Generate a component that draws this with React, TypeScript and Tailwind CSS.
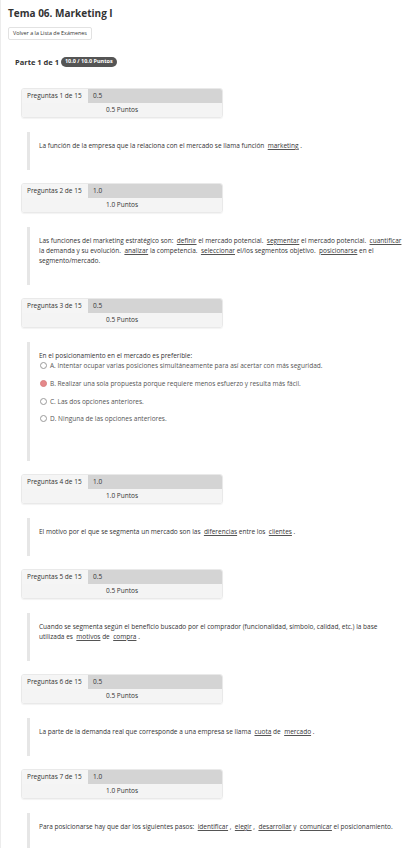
import React from "react";

type Q = {
  n: number;
  pts: string;
  body: React.ReactNode;
  pb?: string;
};

const U = ({ children }: { children: React.ReactNode }) => (
  <>
    {"\u00a0"}
    <span className="underline decoration-[#555] underline-offset-[1px]">{children}</span>
  </>
);

function Header({ n, pts }: { n: number; pts: string }) {
  return (
    <div className="w-[202px] rounded-[3px] border border-[#e9e9e9] overflow-hidden shadow-[0_1px_1px_rgba(0,0,0,0.05)] text-[6.5px] text-[#333]">
      <div className="flex h-[14px]">
        <div className="w-[66px] bg-[#f5f5f5] pl-[5px] flex items-center">Preguntas {n} de 15</div>
        <div className="flex-1 bg-[#d4d4d4] pl-[5px] flex items-center">{pts}</div>
      </div>
      <div className="h-[14px] bg-[#f4f4f4] flex items-center justify-center">
        {pts} Puntos
      </div>
    </div>
  );
}

function Radio({ filled }: { filled?: boolean }) {
  return (
    <span
      className={
        filled
          ? "inline-block w-[7px] h-[7px] rounded-full bg-[#e5888a] border border-[#d98080] mr-[3px] align-[-1px]"
          : "inline-block w-[7px] h-[7px] rounded-full bg-white border border-[#9a9a9a] mr-[3px] align-[-1px]"
      }
    />
  );
}

export default function App() {
  const qs: Q[] = [
    {
      n: 1,
      pts: "0.5",
      body: (
        <p>
          La función de la empresa que la relaciona con el mercado se llama función <U>marketing</U> .
        </p>
      ),
    },
    {
      n: 2,
      pts: "1.0",
      body: (
        <p>
          Las funciones del marketing estratégico son: <U>definir</U> el mercado potencial. <U>segmentar</U> el
          mercado potencial. <U>cuantificar</U> la demanda y su evolución. <U>analizar</U> la competencia.{" "}
          <U>seleccionar</U> el/los segmentos objetivo. <U>posicionarse</U> en el segmento/mercado.
        </p>
      ),
    },
    {
      n: 3,
      pts: "0.5",
      pb: "pb-[37px]",
      body: (
        <div>
          <p>En el posicionamiento en el mercado es preferible:</p>
          <div className="text-[#555] pl-px">
            <div className="h-[18px] leading-[10px]">
              <Radio />A. Intentar ocupar varias posiciones simultáneamente para así acertar con más seguridad.
            </div>
            <div className="h-[18px] leading-[10px]">
              <Radio filled />B. Realizar una sola propuesta porque requiere menos esfuerzo y resulta más fácil.
            </div>
            <div className="h-[17px] leading-[10px]">
              <Radio />C. Las dos opciones anteriores.
            </div>
            <div className="h-[10px] leading-[10px]">
              <Radio />D. Ninguna de las opciones anteriores.
            </div>
          </div>
        </div>
      ),
    },
    {
      n: 4,
      pts: "1.0",
      body: (
        <p>
          El motivo por el que se segmenta un mercado son las <U>diferencias</U> entre los <U>clientes</U> .
        </p>
      ),
    },
    {
      n: 5,
      pts: "0.5",
      body: (
        <p>
          Cuando se segmenta según el beneficio buscado por el comprador (funcionalidad, símbolo, calidad, etc.) la
          base
          <br />
          utilizada es <U>motivos</U> de <U>compra</U> .
        </p>
      ),
    },
    {
      n: 6,
      pts: "0.5",
      body: (
        <p>
          La parte de la demanda real que corresponde a una empresa se llama <U>cuota</U> de <U>mercado</U> .
        </p>
      ),
    },
    {
      n: 7,
      pts: "1.0",
      body: (
        <p>
          Para posicionarse hay que dar los siguientes pasos: <U>identificar</U> , <U>elegir</U> ,{" "}
          <U>desarrollar</U> y <U>comunicar</U> el posicionamiento.
        </p>
      ),
    },
  ];

  return (
    <div className="min-h-screen bg-white border-l border-[#ececec] font-['Open_Sans',sans-serif] text-[#333]">
      <div className="pl-[7px] pt-[6px] flex flex-col items-start">
        <h1 className="text-[10px] leading-[15px] font-bold text-[#333]">Tema 06. Marketing I</h1>
        <button className="mt-[6px] h-[13px] px-[4px] border border-[#e2e2e2] rounded-[2px] bg-white text-[5.4px] leading-[11px] text-[#333]">
          Volver a la Lista de Exámenes
        </button>
      </div>
      <div className="pl-[14px] mt-[17px] flex items-center h-[10px]">
        <span className="text-[7.5px] font-bold text-[#333] leading-[10px]">Parte 1 de 1</span>
        <span className="ml-[2px] h-[9.5px] px-[4px] rounded-full bg-[#555] text-white text-[5.5px] font-bold leading-[9.5px]">
          10.0 / 10.0 Puntos
        </span>
      </div>
      <div className="pl-[20px] pt-[21px] flex flex-col">
        {qs.map((q) => (
          <div key={q.n} className="mb-[13px]">
            <Header n={q.n} pts={q.pts} />
            <div
              className={
                "mt-[14px] ml-[6px] mr-[4px] border-l-[3px] border-[#e6e6e6] pl-[9px] pt-[9px] text-[6.5px] leading-[10px] text-[#333] " +
                (q.pb ?? "pb-[19px]")
              }
            >
              {q.body}
            </div>
          </div>
        ))}
      </div>
    </div>
  );
}
